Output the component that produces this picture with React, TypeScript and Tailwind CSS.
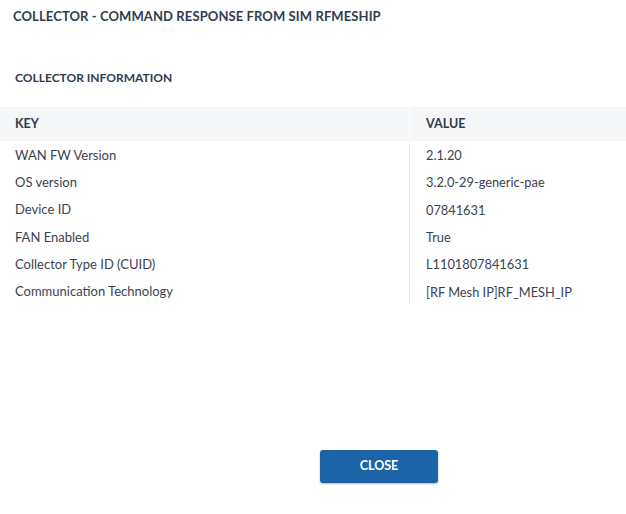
import React from "react";

const rows: [string, string][] = [
  ["WAN FW Version", "2.1.20"],
  ["OS version", "3.2.0-29-generic-pae"],
  ["Device ID", "07841631"],
  ["FAN Enabled", "True"],
  ["Collector Type ID (CUID)", "L1101807841631"],
  ["Communication Technology", "[RF Mesh IP]RF_MESH_IP"],
];

export default function App() {
  return (
    <div
      className="w-[626px] h-[514px] bg-white flex flex-col text-[#3b4350]"
      style={{ fontFamily: "Lato, 'Open Sans', sans-serif" }}
    >
      <div className="h-[33px] pl-[13px] flex items-center text-[13px] font-bold text-[#2f3d4f] tracking-[0.1px]">
        COLLECTOR - COMMAND RESPONSE FROM SIM RFMESHIP
      </div>
      <div className="mt-[35px] h-[19px] pl-[15px] flex items-center text-[12px] font-bold text-[#2f3d4f]">
        COLLECTOR INFORMATION
      </div>
      <div className="mt-[20px] flex flex-col">
        <div className="flex h-[34px] bg-[#f5f6f8] text-[12.5px] font-bold text-[#2f3d4f]">
          <div className="w-[410px] pl-[15px] flex items-center border-r border-white">KEY</div>
          <div className="flex-1 pl-[16px] flex items-center">VALUE</div>
        </div>
        {rows.map(([k, v]) => (
          <div key={k} className="flex h-[27.3px] text-[13px]">
            <div className="w-[410px] pl-[15px] pt-[2px] flex items-center border-r border-[#ececec]">{k}</div>
            <div className="flex-1 pl-[16px] pt-[2px] flex items-center text-[12.8px]">{v}</div>
          </div>
        ))}
      </div>
      <div className="mt-[145px] pl-[320px]">
        <button className="w-[118px] h-[33px] rounded-[3px] bg-[#1c64a8] text-white text-[12.5px] font-bold shadow-[0_1px_2px_rgba(0,0,0,0.3)]">
          CLOSE
        </button>
      </div>
    </div>
  );
}
